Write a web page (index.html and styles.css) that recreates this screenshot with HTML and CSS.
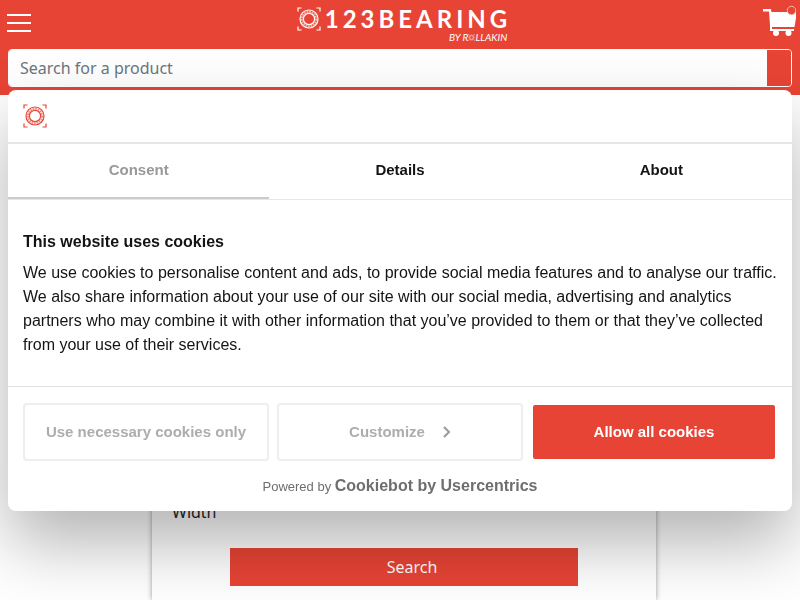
FILE: index.html
```html
<!DOCTYPE html>
<html lang="en">
<head>
  <meta charset="UTF-8">
  <meta name="viewport" content="width=device-width, initial-scale=1">
  <title>123Bearing</title>
  <link rel="stylesheet" href="styles.css">
</head>
<body>

  <svg class="sprite" aria-hidden="true">
    <symbol id="bearing" viewBox="0 0 24 24">
      <g fill="none" stroke="currentColor">
        <path d="M1 4.500V1h3.500M19.500 1H23v3.500M23 19.500V23h-3.500M4.500 23H1v-3.500" stroke-width="1.200"/>
        <circle cx="12" cy="12" r="9" stroke-width="1.200"/>
        <circle cx="12" cy="12" r="7.200" stroke-width="2" stroke-dasharray="1.800 .8" opacity=".6"/>
        <circle cx="12" cy="12" r="5.600" stroke-width="1.200"/>
      </g>
    </symbol>
  </svg>

  <header class="topbar">
    <div class="topbar-row">
      <button class="burger" aria-label="Menu"><span></span><span></span><span></span></button>
      <a class="logo" href="#">
        <svg class="logo-mark"><use href="#bearing"/></svg>
        <span class="logo-text">
          <span class="logo-name">123BEARING</span>
          <span class="logo-by">BY R<svg class="logo-dot"><use href="#bearing"/></svg>LLAKIN</span>
        </span>
      </a>
      <a class="cart" href="#" aria-label="Cart">
        <svg viewBox="0 0 34 32">
          <path d="M0 4h8l.5 3H33v6l-1.500 9H9v2h22v2H7v-6L6 6.500H0z" fill="#fff"/>
          <path d="M9 22.500h23" stroke="#e84435" stroke-width="1"/>
          <circle cx="13" cy="28" r="3" fill="#fff"/>
          <circle cx="25.500" cy="28" r="3" fill="#fff"/>
          <circle cx="28.500" cy="5.500" r="4.200" fill="#e84435" stroke="#f7b5ae"/>
        </svg>
      </a>
    </div>
    <form class="search">
      <input type="text" placeholder="Search for a product" aria-label="Search for a product">
      <button type="button" aria-label="Search"></button>
    </form>
  </header>

  <main class="page">
    <form class="finder">
      <label for="width">Width</label>
      <input id="width" class="finder-input" type="text">
      <button type="button" class="finder-btn">Search</button>
    </form>
  </main>

  <div class="overlay">
    <div class="dialog" role="dialog" aria-labelledby="cookie-title">
      <div class="dialog-head">
        <svg class="dialog-mark"><use href="#bearing"/></svg>
      </div>
      <div class="tabs">
        <button class="tab active">Consent</button>
        <button class="tab">Details</button>
        <button class="tab">About</button>
      </div>
      <div class="dialog-body">
        <h2 id="cookie-title">This website uses cookies</h2>
        <p>We use cookies to personalise content and ads, to provide social media features and to analyse our traffic. We also share information about your use of our site with our social media, advertising and analytics partners who may combine it with other information that you’ve provided to them or that they’ve collected from your use of their services.</p>
      </div>
      <div class="dialog-foot">
        <div class="choices">
          <button class="choice">Use necessary cookies only</button>
          <button class="choice">Customize
            <svg class="chevron" viewBox="0 0 8 12"><path d="M1 1l5 5-5 5" fill="none" stroke="currentColor" stroke-width="2"/></svg>
          </button>
          <button class="choice primary">Allow all cookies</button>
        </div>
        <a class="powered" href="#">Powered by <strong>Cookiebot by Usercentrics</strong></a>
      </div>
    </div>
  </div>

</body>
</html>
```
FILE: styles.css
```css
* {
  box-sizing: border-box;
}

body {
  margin: 0;
  height: 100vh;
  display: flex;
  flex-direction: column;
  overflow: hidden;
  background: #fff;
  color: #212529;
  font-family: "Noto Sans", sans-serif;
  font-size: 16px;
  line-height: 24px;
}

button, input {
  font: inherit;
}

button {
  cursor: pointer;
}

.sprite {
  display: none;
}

/* header */
.topbar {
  background: #e84435;
  padding: 0 8px 8px;
}

.topbar-row {
  display: grid;
  grid-template-columns: 1fr auto 1fr;
  align-items: center;
  height: 49px;
  margin: 0 -5px 0 -1px;
}

.burger {
  display: flex;
  flex-direction: column;
  gap: 6px;
  width: 24px;
  padding: 0;
  margin-bottom: 3px;
  border: none;
  background: none;
}

.burger span {
  height: 2px;
  width: 100%;
  background: #fff;
}

.logo {
  display: flex;
  gap: 4px;
  color: #fff;
  text-decoration: none;
}

.logo-mark {
  width: 24px;
  height: 24px;
}

.logo-text {
  display: flex;
  flex-direction: column;
}

.logo-name {
  margin-right: -4px;
  font: bold 24px/24px Lato, sans-serif;
  letter-spacing: 4px;
}

.logo-by {
  align-self: flex-end;
  font: italic 10px/12px Lato, sans-serif;
}

.logo-dot {
  width: 7px;
  height: 7px;
}

.cart {
  justify-self: end;
  margin-bottom: 8px;
}

.cart svg {
  display: block;
  width: 34px;
  height: 32px;
}

.search {
  display: flex;
  height: 38px;
  border: 1px solid #fff;
  border-radius: 4px;
  overflow: hidden;
}

.search input {
  flex: 1;
  min-width: 0;
  padding: 0 11px;
  border: none;
  background: #fff;
}

.search input::placeholder {
  color: #6c757d;
}

.search button {
  width: 24px;
  border: none;
  background: #e84435;
}

/* bearing finder */
.page {
  flex: 1;
  min-height: 0;
  padding: 24px 0 0 8px;
}

.finder {
  display: flex;
  flex-direction: column;
  max-width: 504px;
  height: 100%;
  margin: 0 auto;
  padding: 381px 20px 0;
  background: #fff;
  box-shadow: 0 0 5px rgba(0, 0, 0, .4);
}

.finder-input {
  display: none;
}

.finder-btn {
  flex-shrink: 0;
  width: 75%;
  height: 38px;
  margin: 24px auto 0;
  border: none;
  background: #e84435;
  color: #fff;
  padding: 0 0 0 16px;
}

/* cookie dialog */
.overlay {
  position: fixed;
  inset: 0;
  display: flex;
  align-items: center;
  padding: 0 8px;
}

.dialog {
  width: 100%;
  border-radius: 8px;
  background: #fff;
  color: #141414;
  box-shadow: 0 32px 68px rgba(0, 0, 0, .3);
  font-family: Helvetica, "Liberation Sans", sans-serif;
  font-size: 15px;
}

.dialog-head {
  padding: 14px 15px;
  border-bottom: 2px solid #e6e6e6;
}

.dialog-mark {
  display: block;
  width: 24px;
  height: 24px;
  color: #e84435;
}

.tabs {
  display: flex;
  border-bottom: 1px solid #e6e6e6;
}

.tab {
  flex: 1;
  height: 55px;
  border: none;
  border-bottom: 2px solid transparent;
  background: none;
  color: #141414;
  font-weight: bold;
}

.tab.active {
  border-bottom-color: #ccc;
  color: #999;
}

.dialog-body {
  padding: 30px 8px 29px 15px;
}

.dialog-body h2 {
  margin: 0 0 7px;
  font-size: 16px;
  line-height: 24px;
}

.dialog-body p {
  margin: 0;
  font-size: 16px;
}

.dialog-foot {
  padding: 16px 15px 12px;
  border-top: 1px solid #e0e0e0;
  text-align: center;
}

.choices {
  display: grid;
  grid-template-columns: repeat(3, 1fr);
  gap: 8px;
}

.choice {
  display: flex;
  align-items: center;
  justify-content: center;
  gap: 18px;
  height: 58px;
  border: 2px solid #eee;
  border-radius: 4px;
  background: #fff;
  color: #adadad;
  font-weight: bold;
}

.choice.primary {
  height: 54px;
  margin: 2px;
  border-color: #e84435;
  border-radius: 2px;
  background: #e84435;
  color: #fff;
}

.chevron {
  width: 8px;
  height: 12px;
  color: #999;
}

.powered {
  display: block;
  margin-top: 13px;
  color: #6e6e6e;
  font-size: 13px;
  text-decoration: none;
}

.powered strong {
  font-size: 16px;
}
```
